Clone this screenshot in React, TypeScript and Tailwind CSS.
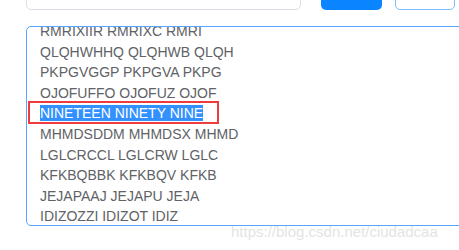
import React from "react";

const lines = [
  "RMRIXIIR RMRIXC RMRI",
  "QLQHWHHQ QLQHWB QLQH",
  "PKPGVGGP PKPGVA PKPG",
  "OJOFUFFO OJOFUZ OJOF",
  "NINETEEN NINETY NINE",
  "MHMDSDDM MHMDSX MHMD",
  "LGLCRCCL LGLCRW LGLC",
  "KFKBQBBK KFKBQV KFKB",
  "JEJAPAAJ JEJAPU JEJA",
  "IDIZOZZI IDIZOT IDIZ",
];

export default function App() {
  return (
    <div
      className="relative w-[459px] h-[250px] overflow-hidden bg-white"
      style={{ fontFamily: '"Liberation Sans", Arial, sans-serif' }}
    >
      <div className="flex items-end h-[10px] overflow-hidden pl-[26px]">
        <div className="w-[275px] h-[32px] shrink-0 rounded-[5px] border border-[#dcdfe6] bg-white" />
        <div className="ml-[20px] w-[61px] h-[32px] shrink-0 rounded-[5px] bg-[#0a84ff]" />
        <div className="ml-[13px] w-[60px] h-[32px] shrink-0 rounded-[5px] border border-[#7fbbff] bg-white" />
      </div>
      <div className="mt-[16px] ml-[26px] w-[450px] h-[200px] rounded-[5px] border border-[#55a6ff] overflow-hidden">
        <div className="mt-[-6px] pl-[13px] text-[14px] leading-[20.6px] text-[#606266]">
          {lines.map((l, i) => (
            <div key={i} className="whitespace-nowrap">
              {i === 4 ? <span className="bg-[#3390ff] text-white">{l}</span> : l}
            </div>
          ))}
        </div>
      </div>
      <div className="absolute left-[28px] top-[101px] w-[191px] h-[23px] border-2 border-[#ee3b3b]" />
      <div className="absolute left-[231px] top-[223px] text-[15px] leading-[18px] text-[#e4e4e4]">
        https://blog.csdn.net/ciudadcaa
      </div>
    </div>
  );
}
